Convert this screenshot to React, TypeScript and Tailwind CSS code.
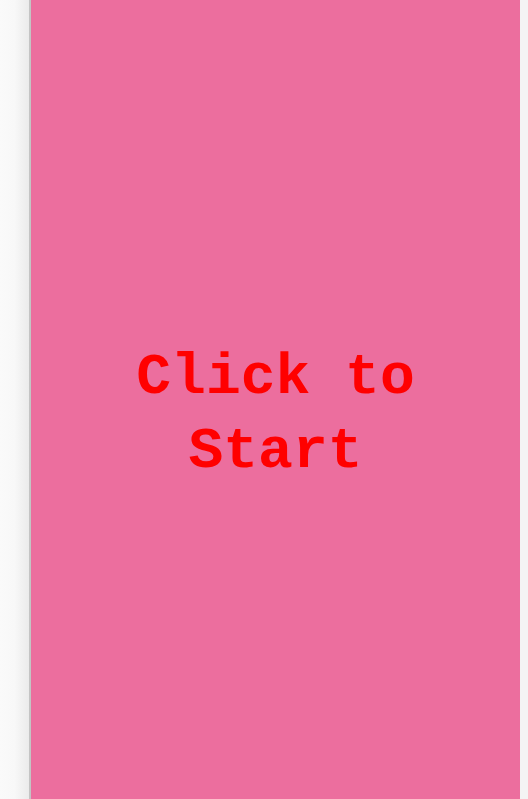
export default function App() {
  return (
    <div className="flex h-[799px] w-[528px] overflow-hidden bg-[#f3f3f3]">
      <div className="w-[29px] shrink-0 bg-gradient-to-r from-[#fafafa] via-[#f8f8f8] to-[#ebebeb]" />
      <div className="w-[2px] shrink-0 bg-[#c4c4c4]" />
      <div className="flex w-[489px] shrink-0 items-center justify-center bg-[#ec6e9e] pt-[31px]">
        <p className="text-center font-['Courier_New','Nimbus_Mono_PS','Nimbus_Mono_L',FreeMono,Courier,'Liberation_Mono',monospace] text-[58px] font-bold leading-[74px] text-[#ff0000]">
          Click to
          <br />
          Start
        </p>
      </div>
      <div className="flex-1 bg-[#f4f4f4]" />
    </div>
  )
}
